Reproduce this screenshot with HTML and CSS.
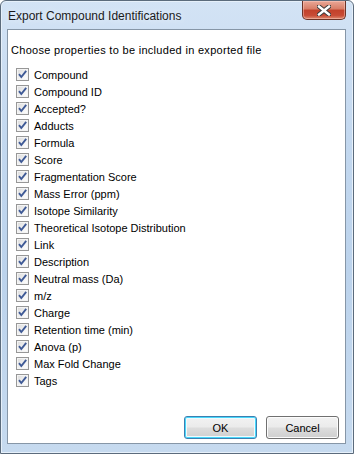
FILE: index.html
```html
<!DOCTYPE html>
<html lang="en">
<head>
    <meta charset="UTF-8">
    <title>Export Compound Identifications</title>
    <link rel="stylesheet" href="styles.css">
</head>
<body>

    <!-- dialog window -->
    <div class="window">
        <div class="titlebar">
            <span class="title">Export Compound Identifications</span>
            <div class="close-btn">
                <svg width="14" height="11" viewBox="0 0 14 11">
                    <path d="M2 1.5 L12 9.5 M12 1.5 L2 9.5" stroke="#3b3b3b" stroke-width="4.4" stroke-linecap="square"/>
                    <path d="M2 1.5 L12 9.5 M12 1.5 L2 9.5" stroke="#ffffff" stroke-width="2.4" stroke-linecap="square"/>
                </svg>
            </div>
        </div>

        <div class="client">
            <p class="intro">Choose properties to be included in exported file</p>

            <div class="prop-list" id="prop-list"></div>

            <div class="buttons">
                <button class="btn btn-default">OK</button>
                <button class="btn">Cancel</button>
            </div>
        </div>
    </div>

    <script>
        // properties shown in the list
        const props = [
            'Compound', 'Compound ID', 'Accepted?', 'Adducts', 'Formula', 'Score',
            'Fragmentation Score', 'Mass Error (ppm)', 'Isotope Similarity',
            'Theoretical Isotope Distribution', 'Link', 'Description',
            'Neutral mass (Da)', 'm/z', 'Charge', 'Retention time (min)',
            'Anova (p)', 'Max Fold Change', 'Tags'
        ];

        const list = document.getElementById('prop-list');
        props.forEach(name => {
            const row = document.createElement('label');
            row.className = 'prop';
            row.innerHTML =
                '<span class="check"><svg width="11" height="11" viewBox="0 0 11 11">' +
                '<path d="M2 5.2 L4.3 8 L9.2 1.8" fill="none" stroke="#3f5a96" stroke-width="1.9"/>' +
                '</svg></span>' +
                '<span class="prop-name">' + name + '</span>';
            list.appendChild(row);
        });
    </script>

</body>
</html>
```

FILE: styles.css
```css
body {
    margin: 0;
    padding: 0;
    background-color: #ffffff;
    font-family: "Liberation Sans", Arial, sans-serif;
}

/* window frame */
.window {
    width: 354px;
    height: 454px;
    box-sizing: border-box;
    border: 1px solid #5b6b7c;
    border-radius: 6px 6px 0 0;
    background: linear-gradient(to bottom, #d3e3f5 0%, #c3d8ef 30%, #bcd3ec 60%, #c6daef 100%);
    display: flex;
    flex-direction: column;
    box-shadow: inset 0 0 0 1px #e6f0fa;
}

.titlebar {
    height: 28px;
    display: flex;
    align-items: flex-start;
    justify-content: space-between;
}

.title {
    font-size: 12px;
    color: #1a1a1a;
    margin: 8px 0 0 7px;
    text-shadow: 0 0 6px #eef5fc;
}

/* close button */
.close-btn {
    width: 44px;
    height: 19px;
    box-sizing: border-box;
    margin-right: 7px;
    border: 1px solid #6b3327;
    border-top: none;
    border-radius: 0 0 5px 5px;
    background: linear-gradient(to bottom, #eaa897 0%, #d77c66 45%, #c2412a 50%, #c84b35 80%, #de8a70 100%);
    box-shadow: inset 0 0 0 1px rgba(255, 210, 200, 0.45);
    display: flex;
    align-items: center;
    justify-content: center;
}

/* white area */
.client {
    flex-grow: 1;
    margin: 0 7px 9px 6px;
    background-color: #ffffff;
    border: 1px solid #8696a7;
    display: flex;
    flex-direction: column;
    padding: 0 6px 0 3px;
}

.intro {
    font-size: 11px;
    color: #000;
    margin: 14px 0 0 0;
    line-height: 13px;
    letter-spacing: 0.3px;
}

.prop-list {
    margin-top: 9px;
    display: flex;
    flex-direction: column;
    padding-left: 5px;
}

.prop {
    height: 17px;
    display: flex;
    align-items: center;
    font-size: 11px;
    color: #000;
}

.check {
    width: 13px;
    height: 13px;
    box-sizing: border-box;
    border: 1px solid #979797;
    background: linear-gradient(135deg, #d9d9d9 0%, #f4f4f4 60%, #ffffff 100%);
    box-shadow: inset 0 0 0 1px #f4f4f4;
    display: flex;
    align-items: center;
    justify-content: center;
    margin-right: 5px;
}

.check svg {
    display: block;
}

/* bottom buttons */
.buttons {
    margin-top: auto;
    margin-bottom: 4px;
    display: flex;
    justify-content: flex-end;
    gap: 9px;
}

.btn {
    width: 73px;
    height: 23px;
    font-family: "Liberation Sans", Arial, sans-serif;
    font-size: 11px;
    color: #000;
    border: 1px solid #707070;
    border-radius: 3px;
    background: linear-gradient(to bottom, #f2f2f2 0%, #ebebeb 48%, #dddddd 52%, #cfcfcf 100%);
    box-shadow: inset 0 0 0 1px #fcfcfc;
    padding: 0;
}

.btn-default {
    border-color: #3c7fb1;
    box-shadow: inset 0 0 0 1px #48d8fb, inset 0 0 0 2px #f0fafe;
}
```
